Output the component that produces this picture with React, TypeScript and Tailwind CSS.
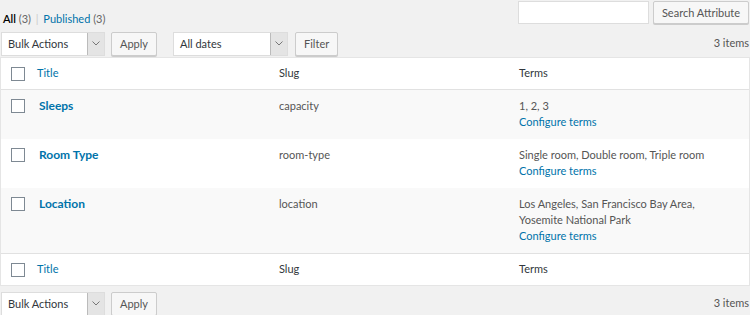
import React from 'react';

const rows = [
  { title: 'Sleeps', slug: 'capacity', terms: ['1, 2, 3'], alt: true },
  { title: 'Room Type', slug: 'room-type', terms: ['Single room, Double room, Triple room'], alt: false },
  { title: 'Location', slug: 'location', terms: ['Los Angeles, San Francisco Bay Area,', 'Yosemite National Park'], alt: true },
];

function Checkbox() {
  return <span className="block w-[14px] h-[14px] border border-[#7e8993] bg-white" />;
}

function Select({ label, width }: { label: string; width: string }) {
  return (
    <div className={`flex h-[24px] bg-white border border-[#ddd] ${width}`}>
      <span className="flex-1 pl-[6px] leading-[22px] text-[#32373c]">{label}</span>
      <span className="w-[17px] flex items-center justify-center bg-[#e4e4e4] border-l border-[#bbb]">
        <svg width="8" height="5" viewBox="0 0 8 5">
          <path d="M0.5 0.5 L4 4 L7.5 0.5" fill="none" stroke="#777" strokeWidth="1" />
        </svg>
      </span>
    </div>
  );
}

function Button({ children }: { children: React.ReactNode }) {
  return (
    <span className="block h-[24px] px-[8px] leading-[22px] bg-[#f7f7f7] border border-[#ccc] rounded-[2px] text-[#555] shadow-[0_1px_0_#ccc]">
      {children}
    </span>
  );
}

function HeadRow({ border }: { border: string }) {
  return (
    <div className={`flex h-[32px] items-center ${border} border-[#e1e1e1] text-[#32373c]`}>
      <div className="w-[28px] pl-[10px]"><Checkbox /></div>
      <div className="w-[242px] pl-[8px] text-[#0073aa]">Title</div>
      <div className="w-[240px] pl-[8px]">Slug</div>
      <div className="flex-1 pl-[8px]">Terms</div>
    </div>
  );
}

export default function App() {
  return (
    <div
      className="w-[750px] h-[315px] bg-[#f1f1f1] overflow-hidden text-[11px] text-[#555]"
      style={{ fontFamily: 'Lato, "Liberation Sans", sans-serif' }}
    >
      {/* Top: status links and search */}
      <div className="flex justify-between h-[30px]">
        <div className="pl-[3px] pt-[11px] text-[#666]">
          <span className="text-[#000] font-semibold">All</span> (3) <span className="text-[#ccc] mx-[2px]">|</span>{' '}
          <span className="text-[#0073aa]">Published</span> (3)
        </div>
        <div className="flex gap-[4px] pt-[1px] pr-[1px]">
          <span className="block w-[131px] h-[23px] bg-white border border-[#ddd]" />
          <span className="block w-[96px] h-[23px] text-center leading-[21px] bg-[#f7f7f7] border border-[#ccc] rounded-[2px] text-[#555] shadow-[0_1px_0_#ccc]">
            Search Attribute
          </span>
        </div>
      </div>

      {/* Top tablenav */}
      <div className="flex items-center h-[27px] pl-[1px] pr-[1px]">
        <Select label="Bulk Actions" width="w-[104px]" />
        <span className="ml-[6px]"><Button>Apply</Button></span>
        <span className="ml-[16px]"><Select label="All dates" width="w-[115px]" /></span>
        <span className="ml-[7px]"><Button>Filter</Button></span>
        <span className="ml-auto">3 items</span>
      </div>

      {/* Table */}
      <div className="bg-white border border-[#e5e5e5]">
        <HeadRow border="border-b" />
        {rows.map((r) => (
          <div key={r.title} className={`flex pt-[8px] pb-[9px] leading-[16px] ${r.alt ? 'bg-[#f9f9f9]' : 'bg-white'}`}>
            <div className="w-[28px] pl-[10px] pt-[1px]"><Checkbox /></div>
            <div className="w-[242px] pl-[10px] text-[12px] font-bold text-[#0073aa]">{r.title}</div>
            <div className="w-[240px] pl-[8px]">{r.slug}</div>
            <div className="flex-1 pl-[8px]">
              {r.terms.map((t) => (
                <div key={t}>{t}</div>
              ))}
              <div className="text-[#0073aa]">Configure terms</div>
            </div>
          </div>
        ))}
        <HeadRow border="border-t" />
      </div>

      {/* Bottom tablenav */}
      <div className="flex items-center h-[27px] mt-[4px] pl-[1px] pr-[1px]">
        <Select label="Bulk Actions" width="w-[104px]" />
        <span className="ml-[6px]"><Button>Apply</Button></span>
        <span className="ml-auto">3 items</span>
      </div>
    </div>
  );
}
